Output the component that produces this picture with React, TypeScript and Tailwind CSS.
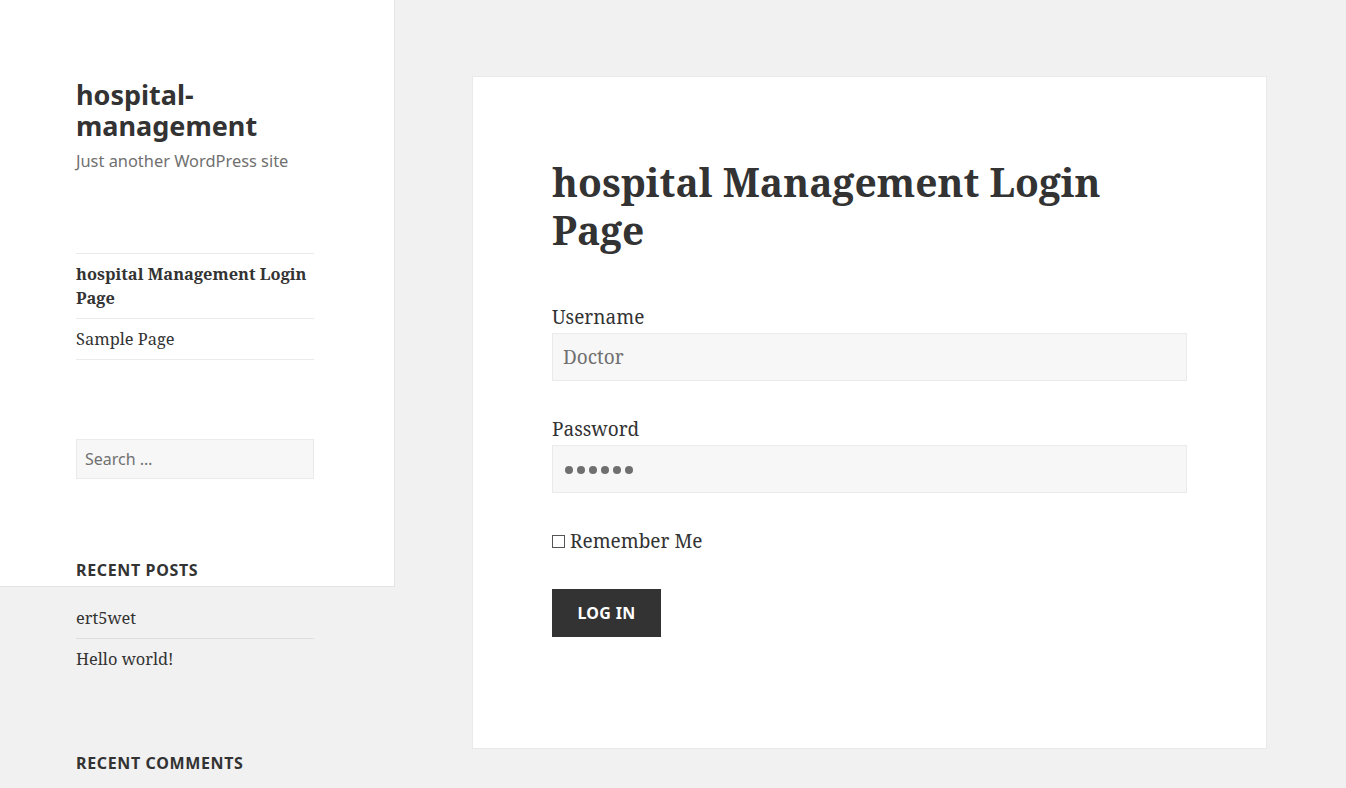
import React from "react";

const serif = { fontFamily: '"Noto Serif", "DejaVu Serif", serif' };
const sans = { fontFamily: '"Noto Sans", "Open Sans", sans-serif' };

export default function App() {
  return (
    <div className="min-h-[788px] w-full bg-[#f1f1f1] text-[#333333] flex items-start" style={serif}>
      {/* Sidebar */}
      <aside className="w-[395px] h-[587px] shrink-0 bg-white border-r border-b border-[#e4e4e4]">
        <div className="pl-[76px] w-[314px] pt-[79px]">
          <div style={sans}>
            <h1 className="text-[27px] font-bold leading-[31px] text-[#333333]">hospital-<br />management</h1>
            <p className="mt-[8px] text-[16.4px] leading-[24px] text-[#707070]">Just another WordPress site</p>
          </div>
          <nav className="mt-[80px] border-t border-[#eaeaea]">
            <div className="py-2 border-b border-[#eaeaea] text-[16.4px] leading-[24px] font-bold">hospital Management Login Page</div>
            <div className="py-2 border-b border-[#eaeaea] text-[16.4px] leading-[24px]">Sample Page</div>
          </nav>
          <div className="mt-[79px]">
            <div className="h-[40px] w-[238px] bg-[#f7f7f7] border border-[#eaeaea] px-2 flex items-center text-[16px] text-[#707070]" style={sans}>Search …</div>
          </div>
          <h2 className="mt-[79px] text-[16px] leading-[24px] font-bold uppercase tracking-[0.04em]" style={sans}>Recent Posts</h2>
          <ul className="mt-[24px]">
            <li className="pb-2 border-b border-[#dedede] text-[16.4px] leading-[24px]">ert5wet</li>
            <li className="pt-2 text-[16.4px] leading-[24px]">Hello world!</li>
          </ul>
          <h2 className="mt-[80px] text-[16px] leading-[24px] font-bold uppercase tracking-[0.04em]" style={sans}>Recent Comments</h2>
        </div>
      </aside>

      {/* Main */}
      <main className="flex-1 pl-[77px] pt-[76px] pb-[40px]">
        <article className="w-[795px] bg-white border border-[#e9e9e9] pl-[79px] pr-[79px] pt-[81px] pb-[111px]">
          <h1 className="text-[39px] leading-[48px] font-bold">hospital Management Login Page</h1>
          <form className="mt-[47px] text-[19px] leading-[32px]">
            <label className="block">Username</label>
            <div className="h-[48px] bg-[#f7f7f7] border border-[#eaeaea] px-[10px] flex items-center text-[#707070]">Doctor</div>
            <label className="block mt-[32px]">Password</label>
            <div className="h-[48px] bg-[#f7f7f7] border border-[#eaeaea] pl-[12px] pt-[1px] flex items-center gap-[4px]">
              <span className="w-[8px] h-[8px] rounded-full bg-[#6f6f6f]"></span>
              <span className="w-[8px] h-[8px] rounded-full bg-[#6f6f6f]"></span>
              <span className="w-[8px] h-[8px] rounded-full bg-[#6f6f6f]"></span>
              <span className="w-[8px] h-[8px] rounded-full bg-[#6f6f6f]"></span>
              <span className="w-[8px] h-[8px] rounded-full bg-[#6f6f6f]"></span>
              <span className="w-[8px] h-[8px] rounded-full bg-[#6f6f6f]"></span>
            </div>
            <div className="mt-[32px] flex items-center gap-[5px]">
              <span className="inline-block w-[13px] h-[13px] border border-[#555] bg-white"></span>
              <span>Remember Me</span>
            </div>
            <button type="button" className="mt-[32px] h-[48px] w-[109px] bg-[#333333] text-white text-[16px] font-bold uppercase tracking-[0.02em] flex items-center justify-center" style={sans}>Log In</button>
          </form>
        </article>
      </main>
    </div>
  );
}
